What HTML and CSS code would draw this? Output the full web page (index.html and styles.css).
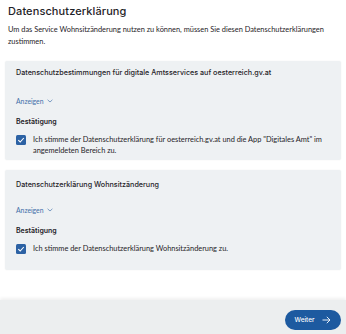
FILE: index.html
```html
<!DOCTYPE html>
<html lang="de">
<head>
<meta charset="utf-8">
<link rel="stylesheet" href="styles.css">
</head>
<body>
<main class="content">
  <h1 class="title">Datenschutzerklärung</h1>
  <p class="intro">Um das Service Wohnsitzänderung nutzen zu können, müssen Sie diesen Datenschutzerklärungen zustimmen.</p>

  <section class="card">
    <h2 class="card-title">Datenschutzbestimmungen für digitale Amtsservices auf oesterreich.gv.at</h2>
    <a class="toggle">Anzeigen <svg width="6" height="4" viewBox="0 0 6 4"><path d="M0.6 0.8 L3 3 L5.4 0.8" fill="none" stroke="#5d86b8" stroke-width="0.8"/></svg></a>
    <h3 class="label">Bestätigung</h3>
    <div class="check-row">
      <span class="box"><svg width="10" height="10" viewBox="0 0 10 10"><path d="M2.3 5.2 L4.2 7 L7.8 3" fill="none" stroke="#fff" stroke-width="1.1"/></svg></span>
      <span class="check-text">Ich stimme der Datenschutzerklärung für oesterreich.gv.at und die App "Digitales Amt" im angemeldeten Bereich zu.</span>
    </div>
  </section>

  <section class="card card-second">
    <h2 class="card-title">Datenschutzerklärung Wohnsitzänderung</h2>
    <a class="toggle">Anzeigen <svg width="6" height="4" viewBox="0 0 6 4"><path d="M0.6 0.8 L3 3 L5.4 0.8" fill="none" stroke="#5d86b8" stroke-width="0.8"/></svg></a>
    <h3 class="label">Bestätigung</h3>
    <div class="check-row">
      <span class="box"><svg width="10" height="10" viewBox="0 0 10 10"><path d="M2.3 5.2 L4.2 7 L7.8 3" fill="none" stroke="#fff" stroke-width="1.1"/></svg></span>
      <span class="check-text">Ich stimme der Datenschutzerklärung Wohnsitzänderung zu.</span>
    </div>
  </section>
</main>
<footer class="footer">
  <button class="next">Weiter <svg width="9" height="8" viewBox="0 0 9 8"><path d="M0.5 4 H8 M4.8 0.8 L8 4 L4.8 7.2" fill="none" stroke="#fff" stroke-width="0.9"/></svg></button>
</footer>
</body>
</html>
```
FILE: styles.css
```css
html, body {
  margin: 0;
  padding: 0;
  background: #fff;
  font-family: Lato, "Liberation Sans", sans-serif;
  color: #1f2328;
}
body {
  width: 346px;
  height: 334px;
  display: flex;
  flex-direction: column;
  overflow: hidden;
}
.content {
  flex: 1;
  padding: 4px 5px 0 5px;
}
.title {
  font-family: Inter, sans-serif;
  font-weight: 500;
  font-size: 11px;
  margin: 0 0 0 3px;
  line-height: 14px;
  letter-spacing: 0.1px;
}
.intro {
  margin: 6px 0 0 3px;
  font-size: 7.4px;
  line-height: 12px;
  width: 320px;
}
.card {
  background: #eef1f3;
  border-radius: 2px;
  margin-top: 13px;
  padding: 7px 11px 4px 11px;
  box-shadow: 0 0 2px rgba(0,0,0,0.06);
}
.card-second {
  margin-top: 10px;
  padding-top: 10px;
  padding-bottom: 16px;
}
.card-title {
  font-family: Inter, sans-serif;
  font-weight: 500;
  font-size: 7.2px;
  margin: 0;
  line-height: 10px;
}
.toggle {
  display: flex;
  align-items: center;
  gap: 4px;
  margin-top: 19px;
  font-size: 6.8px;
  color: #3f6fa8;
  line-height: 8px;
}
.card-second .toggle { margin-top: 16px; }
.label {
  margin: 12px 0 0 0;
  font-family: Inter, sans-serif;
  font-size: 7px;
  font-weight: 600;
  line-height: 10px;
}
.check-row {
  display: flex;
  align-items: flex-start;
  gap: 7px;
  margin-top: 7px;
}
.box {
  flex: none;
  width: 10px;
  height: 10px;
  border-radius: 1.5px;
  background: #2c62a4;
  display: flex;
  margin-top: 0.5px;
}
.check-text {
  font-size: 7.4px;
  line-height: 11px;
}
.footer {
  height: 34px;
  background: #eceeef;
  box-shadow: 0 -2px 3px rgba(0,0,0,0.06);
  display: flex;
  align-items: flex-start;
  justify-content: flex-end;
  padding: 10px 5px 0 5px;
  box-sizing: border-box;
}
.next {
  border: 0;
  background: #1d5aa0;
  color: #fff;
  height: 20px;
  width: 56px;
  border-radius: 10px;
  font-family: Inter, sans-serif;
  font-size: 6.4px;
  font-weight: 500;
  display: flex;
  align-items: center;
  justify-content: center;
  gap: 8px;
  padding: 0;
}
```
